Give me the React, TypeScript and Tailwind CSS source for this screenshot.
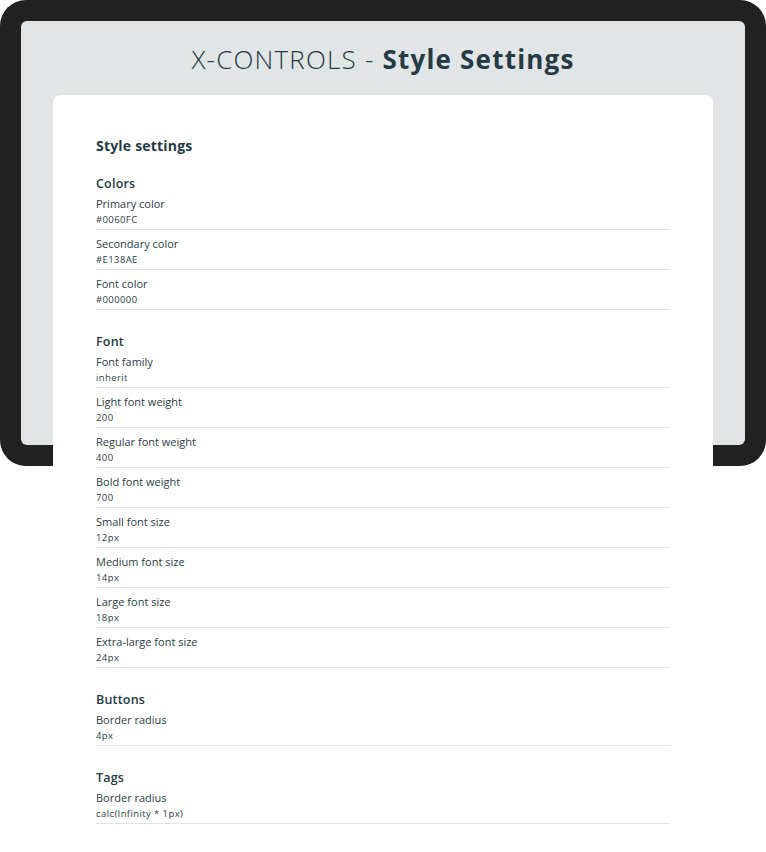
const sections = [
  {
    title: "Colors",
    rows: [
      { label: "Primary color", value: "#0060FC" },
      { label: "Secondary color", value: "#E138AE" },
      { label: "Font color", value: "#000000" },
    ],
  },
  {
    title: "Font",
    rows: [
      { label: "Font family", value: "inherit" },
      { label: "Light font weight", value: "200" },
      { label: "Regular font weight", value: "400" },
      { label: "Bold font weight", value: "700" },
      { label: "Small font size", value: "12px" },
      { label: "Medium font size", value: "14px" },
      { label: "Large font size", value: "18px" },
      { label: "Extra-large font size", value: "24px" },
    ],
  },
  {
    title: "Buttons",
    rows: [{ label: "Border radius", value: "4px" }],
  },
  {
    title: "Tags",
    rows: [{ label: "Border radius", value: "calc(Infinity * 1px)" }],
  },
];

export default function App() {
  return (
    <div className="min-h-[852px] bg-white font-['Open_Sans',sans-serif] text-[#253a45]">
      {/* Device frame */}
      <div className="h-[466px] rounded-[26px] bg-[#212121] p-[21px]">
        <div className="h-full rounded-[6px] bg-[#e1e5e6] px-[32px] pt-[22px]">
          <h1 className="text-center text-[26px] leading-[32px] tracking-[1.2px] text-[#253a45]">
            <span className="font-light">X-CONTROLS - </span>
            <span className="font-bold">Style Settings</span>
          </h1>

          {/* Settings card */}
          <div className="mt-[20px] rounded-t-[8px] bg-white px-[43px] pt-[41px] pb-[40px]">
            <h2 className="text-[14px] font-bold leading-[20px] tracking-[0.2px]">Style settings</h2>

            <div className="mt-[22px] flex flex-col gap-[26px]">
              {sections.map((section) => (
                <div key={section.title}>
                  <h3 className="text-[12.5px] font-semibold leading-[12px] tracking-[0.2px]">{section.title}</h3>
                  {section.rows.map((row) => (
                    <div key={row.label} className="border-b border-[#e2e2e2] pt-[6px] pb-[2px]">
                      <p className="text-[11px] leading-[16px] text-[#2b3d47]">{row.label}</p>
                      <p className="text-[9.5px] leading-[15px] tracking-[0.4px] text-[#2b3d47]">{row.value}</p>
                    </div>
                  ))}
                </div>
              ))}
            </div>
          </div>
        </div>
      </div>
    </div>
  );
}
